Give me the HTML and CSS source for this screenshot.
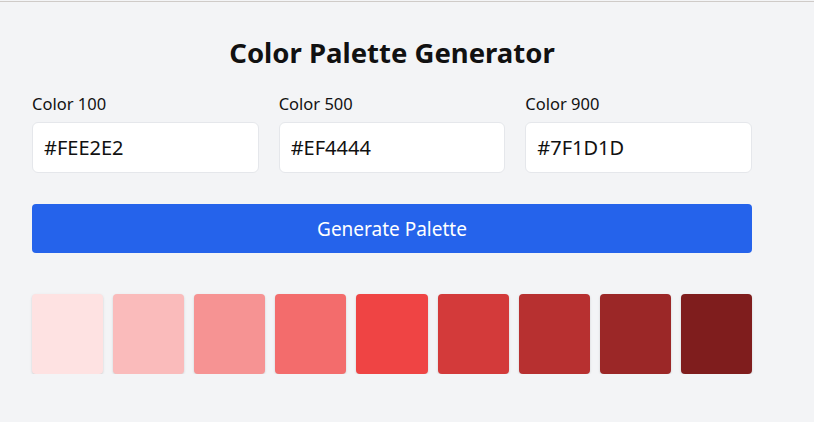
FILE: index.html
```html
<!DOCTYPE html>
<html lang="en">
<head>
<meta charset="utf-8">
<title>Color Palette Generator</title>
<link rel="stylesheet" href="styles.css">
</head>
<body>
<div class="topline"></div>
<main class="container">
  <h1 class="title">Color Palette Generator</h1>
  <div class="inputs">
    <label class="field">
      <span class="label">Color 100</span>
      <input class="input" type="text" value="#FEE2E2">
    </label>
    <label class="field">
      <span class="label">Color 500</span>
      <input class="input" type="text" value="#EF4444">
    </label>
    <label class="field">
      <span class="label">Color 900</span>
      <input class="input" type="text" value="#7F1D1D">
    </label>
  </div>
  <button class="btn" type="button">Generate Palette</button>
  <div class="swatches">
    <div class="swatch" style="background:#FEE2E2"></div>
    <div class="swatch" style="background:#FABBBB"></div>
    <div class="swatch" style="background:#F69393"></div>
    <div class="swatch" style="background:#F36C6C"></div>
    <div class="swatch" style="background:#EF4444"></div>
    <div class="swatch" style="background:#D33A3A"></div>
    <div class="swatch" style="background:#B73030"></div>
    <div class="swatch" style="background:#9B2727"></div>
    <div class="swatch" style="background:#7F1D1D"></div>
  </div>
</main>
</body>
</html>
```
FILE: styles.css
```css
* { box-sizing: border-box; }
html, body {
  margin: 0;
  padding: 0;
  background: #f3f4f6;
  font-family: "Noto Sans", sans-serif;
  color: #111;
}
.topline {
  height: 2px;
  border-bottom: 1px solid #cfcbc8;
}
.container {
  width: 720px;
  margin-left: 32px;
  padding-top: 34px;
}
.title {
  margin: 0;
  text-align: center;
  font-size: 27.5px;
  font-weight: 700;
  line-height: 34px;
}
.inputs {
  display: grid;
  grid-template-columns: repeat(3, minmax(0, 1fr));
  gap: 20px;
  margin-top: 22px;
}
.field { display: flex; flex-direction: column; min-width: 0; }
.label {
  font-size: 16.5px;
  line-height: 24px;
  margin-bottom: 6px;
}
.input {
  width: 100%;
  min-width: 0;
  height: 51px;
  border: 1px solid #e5e7eb;
  border-radius: 6px;
  background: #fff;
  padding: 0 11px;
  font-family: inherit;
  font-size: 20px;
  color: #111;
}
.btn {
  display: block;
  width: 100%;
  height: 49px;
  margin-top: 31px;
  border: 0;
  border-radius: 4px;
  background: #2563eb;
  color: #fff;
  font-family: inherit;
  font-size: 19px;
}
.swatches {
  display: grid;
  grid-template-columns: repeat(9, minmax(0, 1fr));
  gap: 10px;
  margin-top: 41px;
}
.swatch {
  height: 80px;
  border-radius: 4px;
  box-shadow: 0 1px 3px rgba(0,0,0,0.1), 0 1px 2px rgba(0,0,0,0.06);
}
```
